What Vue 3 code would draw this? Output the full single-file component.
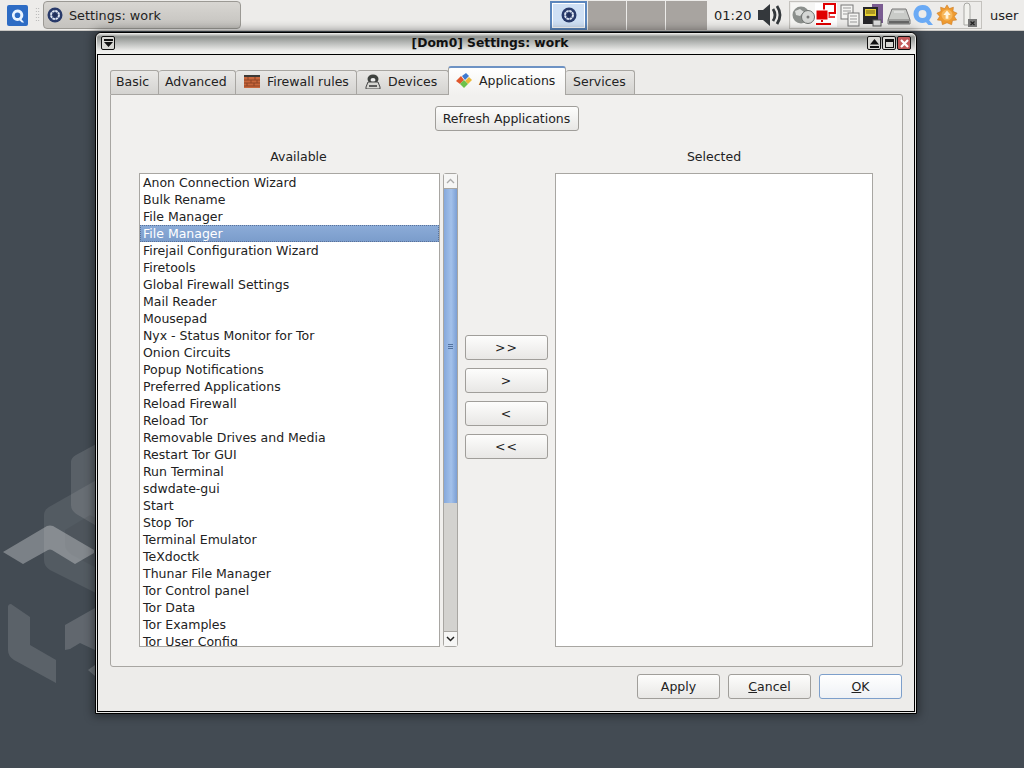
<script setup>
const tabs = [
  { label: 'Basic', w: 49 },
  { label: 'Advanced', w: 77 },
  { label: 'Firewall rules', w: 121, icon: 'fw' },
  { label: 'Devices', w: 92, icon: 'dev' },
  { label: 'Applications', w: 118, icon: 'app', active: true },
  { label: 'Services', w: 69 }
]
const apps = ['Anon Connection Wizard','Bulk Rename','File Manager','File Manager','Firejail Configuration Wizard','Firetools','Global Firewall Settings','Mail Reader','Mousepad','Nyx - Status Monitor for Tor','Onion Circuits','Popup Notifications','Preferred Applications','Reload Firewall','Reload Tor','Removable Drives and Media','Restart Tor GUI','Run Terminal','sdwdate-gui','Start','Stop Tor','Terminal Emulator','TeXdoctk','Thunar File Manager','Tor Control panel','Tor Data','Tor Examples','Tor User Config']
const movers = ['>>', '>', '<', '<<']
</script>

<template>
  <div class="desktop">
    <svg class="wallpaper" width="100" height="300" viewBox="0 430 100 300">
      <path d="M71 462Q71 458 76 455L100 442V528L78 515Q71 511 71 505Z" fill="#fff" opacity=".12" />
      <path d="M44 515Q44 510 49 507L100 478V595L50 570Q44 566 44 560Z" fill="#fff" opacity=".09" />
      <path d="M65 530L90 515L100 520V570L72 555Q65 550 65 545Z" fill="#000" opacity=".06" />
      <path d="M3 552L47 526Q50 525 53 526L94 550V553L75 564L52 550Q50 549 48 550L23 564Z" fill="#fff" opacity=".3" />
      <path d="M8 607Q8 604 11 604L30 617V645L56 660V683L14 660Q8 656 8 650Z" fill="#fff" opacity=".13" />
      <path d="M65 625L95 608V650L80 643L70 649L65 650Z" fill="#fff" opacity=".16" />
      <path d="M88 670L95 665V676Z" fill="#fff" opacity=".2" />
    </svg>

    <header class="taskbar">
      <svg class="q-logo" width="21" height="21" viewBox="0 0 21 21">
        <rect width="21" height="21" rx="2" fill="#2d6cc4" />
        <path d="M10.5 4.5a5.7 5.7 0 1 0 2.2 11l2.2 2h2.3l-2.7-3.2a5.7 5.7 0 0 0-4-9.800zM10.500 7.500a2.800 2.800 0 1 1 0 5.600a2.800 2.800 0 0 1 0-5.600z" fill="#e8f3ff" />
      </svg>
      <div class="grip"></div>
      <div class="task">
        <svg width="16" height="16" viewBox="0 0 16 16"><circle cx="8" cy="8" r="7.500" fill="#283a6a" /><circle cx="8" cy="8" r="4" fill="none" stroke="#dfe6f2" stroke-width="2" stroke-dasharray="2.500 .6" /><circle cx="8" cy="8" r="1.800" fill="#223058" /></svg>
        <span>Settings: work</span>
      </div>
      <div class="pager">
        <div class="desk current">
          <svg width="16" height="16" viewBox="0 0 16 16"><circle cx="8" cy="8" r="7.500" fill="#283a6a" /><circle cx="8" cy="8" r="4" fill="none" stroke="#dfe6f2" stroke-width="2" stroke-dasharray="2.500 .6" /><circle cx="8" cy="8" r="1.800" fill="#223058" /></svg>
        </div>
        <div class="desk w38"></div>
        <div class="desk w38"></div>
        <div class="desk w41"></div>
      </div>
      <span class="clock">01:20</span>
      <svg class="volume" width="28" height="26" viewBox="0 0 28 26">
        <path d="M1 8H6L13 2V24L6 18H1Z" fill="#34383c" />
        <path d="M16 7Q20 13 16 19" fill="none" stroke="#34383c" stroke-width="2.800" />
        <path d="M20 4Q26 13 20 22" fill="none" stroke="#34383c" stroke-width="2.800" />
      </svg>
      <div class="tray">
        <svg class="ic1" width="24" height="24" viewBox="0 0 24 24"><rect width="24" height="24" fill="#f6f6f4" /><circle cx="10" cy="12" r="8.500" fill="#8b8f8c" /><path d="M4 8L9 6L13 9L9 13L5 12Z" fill="#dcdedc" /><circle cx="17" cy="14" r="6.500" fill="#d5d7d5" stroke="#6e7270" /><circle cx="17" cy="14" r="1.500" fill="#777" /></svg>
        <svg class="ic2" width="22" height="24" viewBox="0 0 22 24"><rect width="22" height="24" fill="#fff" /><rect x="9" y="1" width="11" height="9" fill="#fff" stroke="#e00000" stroke-width="2" /><path d="M14 10V13M10 14H20" stroke="#e00000" stroke-width="1.500" /><rect x="1" y="7" width="12" height="10" fill="#e00000" stroke="#fff" /><path d="M7 17V19M1 21H16" stroke="#e00000" stroke-width="2" /></svg>
        <svg class="ic3" width="20" height="24" viewBox="0 0 20 24"><rect x="1" y="2" width="12" height="14" fill="#f4f4f2" stroke="#777" /><rect x="8" y="10" width="11" height="13" fill="#f4f4f2" stroke="#777" /><path d="M3 5H11M3 8H11M3 11H7M10 13H17M10 16H17M10 19H17" stroke="#999" /></svg>
        <svg class="ic4" width="21" height="24" viewBox="0 0 21 24"><rect x="9" y="1" width="11" height="19" fill="#7b5c92" /><rect x="0" y="4" width="15" height="17" fill="#27262a" /><rect x="2" y="6" width="11" height="7" fill="#e8d234" /><path d="M3 8H12M3 10H12" stroke="#705f10" /><rect x="10" y="17" width="8" height="6" fill="#ddd" stroke="#555" /></svg>
        <svg class="ic5" width="24" height="24" viewBox="0 0 24 24"><path d="M5 6H19L23 17V21H1V17Z" fill="#c9cbc8" stroke="#777" /><path d="M1 17H23" stroke="#777" /><rect x="2" y="18" width="20" height="2.500" fill="#666" /><path d="M7 9H17" stroke="#f2f2f2" /></svg>
        <svg class="ic6" width="22" height="24" viewBox="0 0 22 24"><path d="M10.500 2a9 9 0 1 0 3.500 17.300l2.500 2.700H21l-3.800-4.800A9 9 0 0 0 10.500 2zM10.500 7a4 4 0 1 1 0 8a4 4 0 0 1 0-8z" fill="#6aaaf5" /></svg>
        <svg class="ic7" width="22" height="24" viewBox="0 0 24 24"><path d="M12 1L14.500 5L19 3.500L18.500 8L23 10L20 13.500L22.500 17.500L18 18L17 22.500L12 20.500L7 22.500L6 18L1.500 17.500L4 13.500L1 10L5.500 8L5 3.500L9.500 5Z" fill="#ee9b32" stroke="#c9761a" stroke-width=".6" /><circle cx="12" cy="12" r="6" fill="#f7b75a" /><path d="M12 7L16 12H13.500V16H10.500V12H8Z" fill="#fff4dc" /></svg>
        <svg class="ic8" width="16" height="26" viewBox="0 0 16 26"><path d="M2 4Q2 1 5 1Q8 1 8 4V23H2Z" fill="#f2f2ee" stroke="#a8a8a4" /><rect x="6" y="17" width="9" height="8" fill="#777" /><path d="M8.500 19.500L12.500 23M12.500 19.500L8.500 23" stroke="#222" stroke-width="1.300" /></svg>
      </div>
      <span class="user">user</span>
    </header>

    <section class="window">
      <div class="titlebar">
        <button class="wbtn first"><svg width="9" height="9" viewBox="0 0 9 9"><path d="M0 0H9V2H0ZM0 3H9L4.500 8Z" fill="#111" /></svg></button>
        <strong>[Dom0] Settings: work</strong>
        <div class="wbtns">
          <button class="wbtn"><svg width="9" height="9" viewBox="0 0 9 9"><path d="M4.500 0L9 5.500H0ZM0 7H9V9H0Z" fill="#111" /></svg></button>
          <button class="wbtn"><svg width="9" height="9" viewBox="0 0 9 9"><path d="M0 0H9V9H0ZM1 3V8H8V3Z" fill="#111" fill-rule="evenodd" /></svg></button>
          <button class="wbtn close"><svg width="9" height="9" viewBox="0 0 9 9"><path d="M1 1L8 8M8 1L1 8" stroke="#fff" stroke-width="2.200" /></svg></button>
        </div>
      </div>

      <div class="client">
        <nav class="tabs">
          <div v-for="t in tabs" :key="t.label" class="tab" :class="{ active: t.active, iconic: t.icon }" :style="{ width: t.w + 'px' }">
            <svg v-if="t.icon === 'fw'" width="16" height="13" viewBox="0 0 16 13"><rect width="16" height="2" fill="#3c3a36" /><rect y="2" width="16" height="11" fill="#c8673c" /><path d="M0 5H16M0 8H16M0 11H16M4 2V5M11 2V5M7 5V8M13 5V8M3 8V11M10 8V11" stroke="#8e4425" /></svg>
            <svg v-if="t.icon === 'dev'" width="16" height="15" viewBox="0 0 16 15"><ellipse cx="8" cy="5" rx="5.500" ry="4.500" fill="#3f423f" /><ellipse cx="8" cy="6" rx="2.500" ry="2" fill="#eee" /><path d="M1 13L3 8H13L15 13V15H1Z" fill="#d6d6d2" stroke="#444" /><path d="M4 12H12" stroke="#333" stroke-width="1.500" /></svg>
            <svg v-if="t.icon === 'app'" width="16" height="15" viewBox="0 0 16 15"><path d="M0 8L5 3L8 7L4 11Z" fill="#e0562c" /><path d="M6 3L10 0L13 3L9 7Z" fill="#3d7ad0" /><path d="M9 8L13 4L16 7L12 11Z" fill="#e9b93a" /><path d="M4 11L8 7L12 11L8 15Z" fill="#6cc14a" /></svg>
            <span>{{ t.label }}</span>
          </div>
        </nav>

        <div class="pane">
          <button class="btn refresh">Refresh Applications</button>
          <div class="lists">
            <div class="col left">
              <div class="col-label">Available</div>
              <div class="list-row">
                <ul class="list">
                  <li v-for="(a, i) in apps" :key="i" :class="{ sel: i === 3 }">{{ a }}</li>
                </ul>
                <div class="scrollbar">
                  <div class="sb-btn top"><svg width="9" height="6" viewBox="0 0 9 6"><path d="M1 5L4.500 1.500L8 5" fill="none" stroke="#aaa" stroke-width="1.300" /></svg></div>
                  <div class="thumb"><i></i><i></i><i></i></div>
                  <div class="trough"></div>
                  <div class="sb-btn bottom"><svg width="9" height="6" viewBox="0 0 9 6"><path d="M1 1L4.500 4.500L8 1" fill="none" stroke="#222" stroke-width="1.500" /></svg></div>
                </div>
              </div>
            </div>
            <div class="movers">
              <button v-for="m in movers" :key="m" class="btn mover">{{ m }}</button>
            </div>
            <div class="col right">
              <div class="col-label">Selected</div>
              <div class="list selected-list"></div>
            </div>
          </div>
        </div>

        <div class="actions">
          <button class="btn action">Apply</button>
          <button class="btn action"><u>C</u>ancel</button>
          <button class="btn action ok"><u>O</u>K</button>
        </div>
      </div>
    </section>
  </div>
</template>

<style>
html, body { margin: 0; }
</style>

<style scoped>
.desktop {
  position: relative;
  width: 1024px;
  height: 768px;
  overflow: hidden;
  background: #434b53;
  font-family: "DejaVu Sans", sans-serif;
  font-size: 12.5px;
  color: #222;
}
.wallpaper { position: absolute; left: 0; top: 430px; }

.taskbar {
  position: relative;
  height: 31px;
  box-sizing: border-box;
  display: flex;
  align-items: center;
  background: #edecea;
  border-bottom: 1px solid #c9c7c3;
}
.q-logo { margin-left: 7px; }
.grip {
  width: 5px;
  height: 16px;
  margin-left: 7px;
  background-image: radial-gradient(#aaa 0.7px, transparent 0.8px);
  background-size: 2.500px 3px;
}
.task {
  width: 198px;
  height: 28px;
  margin-left: 3px;
  box-sizing: border-box;
  display: flex;
  align-items: center;
  gap: 6px;
  padding-left: 3px;
  border: 1px solid #9b9994;
  border-radius: 4px;
  background: linear-gradient(#d8d6d2, #c4c2be);
  font-size: 12.8px;
}
.pager { display: flex; gap: 1px; height: 29px; margin-left: 309px; }
.desk { background: #a8a4a0; height: 29px; }
.w38 { width: 38px; }
.w41 { width: 41px; }
.current {
  width: 37px;
  box-sizing: border-box;
  border: 2px solid #5b86bd;
  outline: 1px solid #fff;
  outline-offset: -3px;
  background: #cfe0f5;
  display: flex;
  align-items: center;
  justify-content: center;
}
.clock { margin-left: 7px; width: 43px; font-size: 13px; }
.tray {
  width: 193px;
  height: 28px;
  margin-left: 4px;
  box-sizing: border-box;
  display: flex;
  align-items: center;
  gap: 1px;
  padding-left: 1px;
  border: 1px solid #c4c2be;
}
.tray svg { flex: none; }
.ic2 { margin-left: -1px; }
.ic3 { margin-left: 2px; }
.ic4 { margin-left: 2px; }
.ic5 { margin-left: 2px; }
.ic7 { margin-left: 1px; }
.ic8 { margin-left: 3px; }
.user { margin-left: 8px; font-size: 13px; }

.window {
  position: absolute;
  left: 95px;
  top: 32px;
  width: 822px;
  height: 682px;
  box-sizing: border-box;
  padding: 0 1px 1px;
  display: flex;
  flex-direction: column;
  border: 1px solid #000;
  border-radius: 6px 6px 0 0;
  background: #e8e8e6;
  box-shadow: 0 0 10px 2px rgba(0, 0, 0, 0.4);
}
.titlebar {
  position: relative;
  height: 21px;
  flex: none;
  display: flex;
  align-items: center;
  justify-content: center;
  padding-right: 32px;
  border-radius: 5px 5px 0 0;
  background: linear-gradient(#f3f3f1 0, #8f928f 18%, #b5b7b5 45%, #eeeeec 85%, #f2f2f0 100%);
  font-size: 12.3px;
  color: #111;
}
.titlebar strong { position: relative; top: -1px; }
.wbtn {
  width: 14px;
  height: 14px;
  padding: 0;
  display: flex;
  align-items: center;
  justify-content: center;
  border: 1px solid #111;
  border-radius: 2px;
  background: #d8d8d4;
}
.first { position: absolute; left: 4px; top: 3px; }
.wbtns { position: absolute; right: 4px; top: 3px; display: flex; gap: 1px; }
.close { background: #c45a5a; }

.client {
  flex: 1;
  min-height: 0;
  box-sizing: border-box;
  display: flex;
  flex-direction: column;
  padding: 15px 11px 0 12px;
  border: 1px solid #000;
  background: #edecea;
}
.tabs { display: flex; align-items: flex-end; height: 24px; position: relative; z-index: 1; }
.tab {
  height: 24px;
  box-sizing: border-box;
  display: flex;
  align-items: center;
  gap: 7px;
  padding: 0 0 2px 6px;
  border: 1px solid #a8a6a2;
  border-left: 0;
  border-bottom: 0;
  border-radius: 3px 3px 0 0;
  background: linear-gradient(#e9e8e6, #d4d3d0);
  white-space: nowrap;
}
.tab:first-child { border-left: 1px solid #a8a6a2; padding-left: 5px; }
.tab:last-child { padding-left: 7px; }
.tab.iconic { padding-left: 8px; }
.tab.active {
  height: 29px;
  margin-bottom: -1px;
  padding: 0 0 2px 7px;
  border: 1px solid #a8a6a2;
  border-top: 2px solid #6d92c4;
  border-bottom: 0;
  background: linear-gradient(#fff, #f1f0ee);
  position: relative;
  margin-left: -1px;
}
.pane {
  width: 793px;
  height: 573px;
  box-sizing: border-box;
  display: flex;
  flex-direction: column;
  align-items: center;
  padding-top: 11px;
  border: 1px solid #a8a6a2;
  border-radius: 0 3px 3px 3px;
  background: #f1f0ee;
}
.btn {
  box-sizing: border-box;
  height: 25px;
  padding: 0;
  border: 1px solid #a09e9a;
  border-radius: 3px;
  background: linear-gradient(#fdfdfc, #e8e7e5);
  font: inherit;
  color: #222;
}
.refresh { width: 144px; flex: none; }
.lists {
  display: flex;
  align-self: flex-start;
  margin: 17px 0 0 28px;
  height: 505px;
}
.col { display: flex; flex-direction: column; }
.col-label { height: 25px; line-height: 17px; text-align: center; }
.left { width: 319px; }
.right { width: 318px; margin-left: 7px; }
.list-row { display: flex; gap: 3px; height: 474px; }
.list {
  width: 301px;
  height: 474px;
  margin: 0;
  padding: 0;
  box-sizing: border-box;
  overflow: hidden;
  list-style: none;
  border: 1px solid #a8a6a2;
  background: #fff;
}
.selected-list { width: 318px; }
.list li { height: 17px; line-height: 17px; padding-left: 3px; white-space: nowrap; }
.list li.sel {
  background: linear-gradient(#8cacd8, #7a9ccb);
  outline: 1px dotted #5a7299;
  outline-offset: -1px;
  color: #fff;
}
.scrollbar {
  width: 15px;
  height: 474px;
  box-sizing: border-box;
  display: flex;
  flex-direction: column;
  border: 1px solid #a8a6a2;
  border-radius: 3px;
  background: #d3d2cf;
}
.sb-btn {
  height: 14px;
  flex: none;
  display: flex;
  align-items: center;
  justify-content: center;
  background: #f6f6f5;
}
.top { border-bottom: 1px solid #a8a6a2; }
.bottom { border-top: 1px solid #a8a6a2; }
.thumb {
  height: 314px;
  flex: none;
  display: flex;
  flex-direction: column;
  align-items: center;
  justify-content: center;
  gap: 1px;
  background: linear-gradient(90deg, #86a9dc, #a3c1ea 55%, #7c9fd4);
}
.thumb i { width: 5px; height: 1px; background: #52729f; }
.trough { flex: 1; }
.movers {
  width: 83px;
  margin: 187px 0 0 7px;
  display: flex;
  flex-direction: column;
  gap: 8px;
}
.mover { width: 83px; letter-spacing: 1px; }
.actions {
  display: flex;
  justify-content: flex-end;
  gap: 8px;
  margin: 7px 1px 0 0;
}
.action { width: 83px; }
.ok { border-color: #7d9fcb; background: linear-gradient(#fff, #eef1f5); }
</style>
